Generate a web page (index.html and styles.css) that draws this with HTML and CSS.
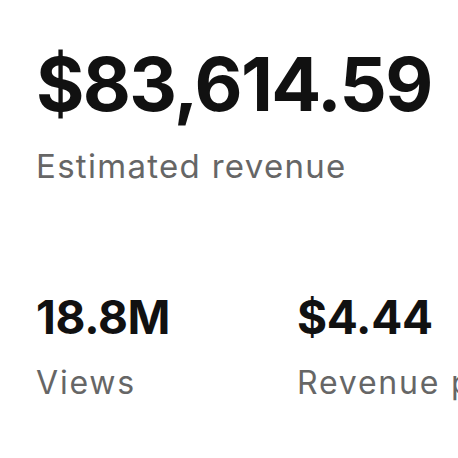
FILE: index.html
```html
<!DOCTYPE html>
<html>
<head>
<meta charset="utf-8">
<link rel="stylesheet" href="styles.css">
</head>
<body>
<main class="summary">
  <section class="headline">
    <div class="headline-value">$83,614.59</div>
    <div class="headline-label">Estimated revenue</div>
  </section>
  <section class="stats">
    <div class="stat">
      <div class="stat-value">18.8M</div>
      <div class="stat-label">Views</div>
    </div>
    <div class="stat">
      <div class="stat-value">$4.44</div>
      <div class="stat-label">Revenue per mille</div>
    </div>
  </section>
</main>
</body>
</html>
```

FILE: styles.css
```css
html, body {
  margin: 0;
  padding: 0;
  background: #fff;
  overflow: hidden;
}

body {
  width: 458px;
  height: 458px;
  font-family: Inter, "Noto Sans", sans-serif;
  color: #111;
}

.summary {
  padding: 44px 0 0 36px;
}

.headline-value {
  font-size: 74px;
  font-weight: 700;
  line-height: 80px;
  letter-spacing: -1.7px;
}

.headline-label {
  margin-top: 22px;
  font-size: 33px;
  line-height: 40px;
  letter-spacing: 1.3px;
  color: #666;
}

.stats {
  display: grid;
  grid-template-columns: 261px max-content;
  margin-top: 105px;
  white-space: nowrap;
}

.stat-value {
  font-size: 46px;
  font-weight: 700;
  line-height: 52px;
  letter-spacing: -0.3px;
}

.stat-label {
  margin-top: 22px;
  font-size: 32px;
  line-height: 36px;
  letter-spacing: 1.8px;
  color: #666;
}
```
